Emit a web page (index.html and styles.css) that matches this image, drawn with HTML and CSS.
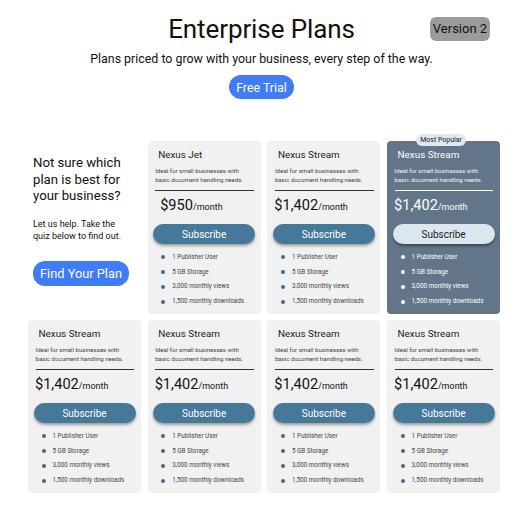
FILE: index.html
```html
<!DOCTYPE html>
<html lang="en">
<head>
  <meta charset="UTF-8">
  <title>Enterprise Plans</title>
  <link rel="stylesheet" href="styles.css">
</head>
<body>
  <header class="top">
    <h1>Enterprise Plans</h1>
    <span class="version">Version 2</span>
    <p class="lead">Plans priced to grow with your business, every step of the way.</p>
    <button class="pill-btn">Free Trial</button>
  </header>

  <div class="plans">
    <!-- Quiz intro -->
    <div class="intro">
      <h2>Not sure which plan is best for your business?</h2>
      <p>Let us help. Take the quiz below to find out.</p>
      <button class="pill-btn big">Find Your Plan</button>
    </div>

    <div class="card">
      <h3>Nexus Jet</h3>
      <p class="desc">Ideal for small businesses with basic document handling needs.</p>
      <div class="price">$950<span>/month</span></div>
      <button class="subscribe">Subscribe</button>
      <ul class="features">
        <li>1 Publisher User</li>
        <li>5 GB Storage</li>
        <li>3,000 monthly views</li>
        <li>1,500 monthly downloads</li>
      </ul>
    </div>

    <div class="card">
      <h3>Nexus Stream</h3>
      <p class="desc">Ideal for small businesses with basic document handling needs.</p>
      <div class="price">$1,402<span>/month</span></div>
      <button class="subscribe">Subscribe</button>
      <ul class="features">
        <li>1 Publisher User</li>
        <li>5 GB Storage</li>
        <li>3,000 monthly views</li>
        <li>1,500 monthly downloads</li>
      </ul>
    </div>

    <div class="card popular">
      <span class="badge">Most Popular</span>
      <h3>Nexus Stream</h3>
      <p class="desc">Ideal for small businesses with basic document handling needs.</p>
      <div class="price">$1,402<span>/month</span></div>
      <button class="subscribe">Subscribe</button>
      <ul class="features">
        <li>1 Publisher User</li>
        <li>5 GB Storage</li>
        <li>3,000 monthly views</li>
        <li>1,500 monthly downloads</li>
      </ul>
    </div>

    <!-- Second row -->
    <div class="card">
      <h3>Nexus Stream</h3>
      <p class="desc">Ideal for small businesses with basic document handling needs.</p>
      <div class="price">$1,402<span>/month</span></div>
      <button class="subscribe">Subscribe</button>
      <ul class="features">
        <li>1 Publisher User</li>
        <li>5 GB Storage</li>
        <li>3,000 monthly views</li>
        <li>1,500 monthly downloads</li>
      </ul>
    </div>

    <div class="card">
      <h3>Nexus Stream</h3>
      <p class="desc">Ideal for small businesses with basic document handling needs.</p>
      <div class="price">$1,402<span>/month</span></div>
      <button class="subscribe">Subscribe</button>
      <ul class="features">
        <li>1 Publisher User</li>
        <li>5 GB Storage</li>
        <li>3,000 monthly views</li>
        <li>1,500 monthly downloads</li>
      </ul>
    </div>

    <div class="card">
      <h3>Nexus Stream</h3>
      <p class="desc">Ideal for small businesses with basic document handling needs.</p>
      <div class="price">$1,402<span>/month</span></div>
      <button class="subscribe">Subscribe</button>
      <ul class="features">
        <li>1 Publisher User</li>
        <li>5 GB Storage</li>
        <li>3,000 monthly views</li>
        <li>1,500 monthly downloads</li>
      </ul>
    </div>

    <div class="card">
      <h3>Nexus Stream</h3>
      <p class="desc">Ideal for small businesses with basic document handling needs.</p>
      <div class="price">$1,402<span>/month</span></div>
      <button class="subscribe">Subscribe</button>
      <ul class="features">
        <li>1 Publisher User</li>
        <li>5 GB Storage</li>
        <li>3,000 monthly views</li>
        <li>1,500 monthly downloads</li>
      </ul>
    </div>
  </div>
</body>
</html>
```

FILE: styles.css
```css
body {
  font-family: Roboto, "Liberation Sans", Arial, sans-serif;
  color: #111;
  margin: 0;
  background: #fff;
}
button {
  font-family: inherit;
  border: none;
  cursor: pointer;
}
.top {
  position: relative;
  display: flex;
  flex-direction: column;
  align-items: center;
  padding-top: 14px;
}
h1 {
  margin: 0;
  font-size: 26px;
  line-height: 30px;
  font-weight: 400;
  letter-spacing: -0.1px;
}
.version {
  position: absolute;
  top: 17px;
  left: 430px;
  width: 60px;
  height: 24px;
  line-height: 24px;
  text-align: center;
  font-size: 13px;
  background: #9b9b9b;
  border-radius: 6px;
  color: #111;
}
.lead {
  margin: 6.5px 0 0;
  font-size: 12.4px;
  line-height: 16px;
}
.pill-btn {
  margin-top: 8.5px;
  height: 24px;
  padding: 0 7px;
  border-radius: 12px;
  background: #3f7cf6;
  color: #fff;
  font-size: 12.4px;
}
.plans {
  display: grid;
  grid-template-columns: repeat(4, 113px);
  grid-auto-rows: 173px;
  column-gap: 6.7px;
  row-gap: 6px;
  margin: 41.7px 0 0 28px;
}
.intro {
  padding: 14.4px 0 0 5px;
}
.intro h2 {
  margin: 0;
  font-size: 13.2px;
  line-height: 16.7px;
  font-weight: 400;
}
.intro p {
  max-width: 92px;
  margin: 12.4px 0 0;
  font-size: 9px;
  line-height: 12.7px;
}
.pill-btn.big {
  margin-top: 18.4px;
  height: 24.3px;
  font-size: 12.8px;
}
.card {
  position: relative;
  background: #f1f1f1;
  border-radius: 4px;
  padding: 8.3px 5.5px 0;
}
.card h3 {
  margin: 0;
  padding-left: 5px;
  font-size: 9.9px;
  line-height: 12px;
  font-weight: 400;
  color: #222;
}
.desc {
  margin: 5px 1.2px 0 2px;
  padding-bottom: 6px;
  border-bottom: 1px solid #333;
  font-size: 6.1px;
  line-height: 9px;
  color: #444;
}
.price {
  margin-top: 5px;
  padding-right: 25.6px;
  text-align: center;
  font-size: 14.6px;
  line-height: 18px;
}
.price span {
  font-size: 9px;
}
.subscribe {
  display: block;
  width: 100%;
  margin-top: 8.3px;
  height: 20px;
  border-radius: 10px;
  background: #457899;
  color: #fff;
  font-size: 10px;
  box-shadow: 0 2px 3px rgba(0, 0, 0, 0.35);
}
.features {
  list-style: none;
  margin: 5.6px 0 0;
  padding: 0 0 0 8px;
}
.features li {
  display: flex;
  align-items: center;
  gap: 7px;
  font-size: 6.3px;
  line-height: 14.75px;
  color: #444;
}
.features li::before {
  content: "";
  width: 4px;
  height: 4px;
  border-radius: 50%;
  background: #3d6a8b;
}
.popular {
  background: #637689;
  color: #fff;
}
.popular h3,
.popular .features li {
  color: #fff;
}
.popular .desc {
  color: #f2f4f7;
  border-bottom-color: #fff;
}
.popular .subscribe {
  background: #dde7f0;
  color: #222;
  box-shadow: 0 2px 3px rgba(0, 0, 0, 0.4);
}
.popular .features li::before {
  background: #fff;
}
.badge {
  position: absolute;
  top: -7px;
  left: 29px;
  width: 50px;
  height: 12px;
  line-height: 12px;
  text-align: center;
  font-size: 7px;
  color: #222;
  background: #dfe7ef;
  border-radius: 6px;
}
```
